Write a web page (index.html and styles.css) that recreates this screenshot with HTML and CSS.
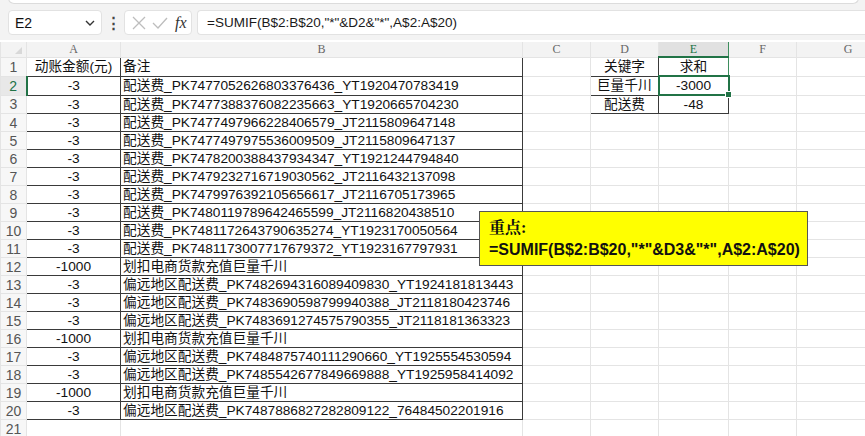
FILE: index.html
```html
<!DOCTYPE html>
<html lang="zh-CN">
<head>
    <meta charset="UTF-8">
    <title>SUMIF 模糊求和</title>
    <link rel="stylesheet" href="styles.css">
</head>
<body>
    <!-- Formula bar -->
    <div class="ribbon-edge"></div>
    <div class="toolbar">
        <div class="name-box">
            <span>E2</span>
            <svg width="10" height="6" viewBox="0 0 10 6"><path d="M1 1 L5 5 L9 1" fill="none" stroke="#333" stroke-width="1.4"/></svg>
        </div>
        <div class="grip">&#8942;</div>
        <div class="fx-box">
            <svg width="16" height="16" viewBox="0 0 16 16"><path d="M2 2 L14 14 M14 2 L2 14" stroke="#bdbdbd" stroke-width="1.3"/></svg>
            <svg width="18" height="16" viewBox="0 0 18 16"><path d="M2 8 L7 13 L16 3" fill="none" stroke="#bdbdbd" stroke-width="1.3"/></svg>
            <span class="fx">fx</span>
        </div>
        <div class="formula-box">=SUMIF(B$2:B$20,"*"&amp;D2&amp;"*",A$2:A$20)</div>
    </div>

    <!-- Sheet grid -->
    <table class="sheet">
        <colgroup>
            <col class="c-row"><col class="c-a"><col class="c-b"><col class="c-n"><col class="c-n"><col class="c-e"><col class="c-n"><col>
        </colgroup>
        <thead>
            <tr>
                <th class="corner"><span class="tri"></span></th>
                <th>A</th><th>B</th><th>C</th><th>D</th><th class="sel-col">E</th><th>F</th><th>G</th>
            </tr>
        </thead>
        <tbody>
            <tr><th>1</th><td class="a">动账金额(元)</td><td class="b">备注</td><td></td><td class="d">关键字</td><td class="d e1">求和</td><td></td><td></td></tr>
            <tr><th class="sel-row">2</th><td class="a">-3</td><td class="b">配送费_PK7477052626803376436_YT1920470783419</td><td></td><td class="d">巨量千川</td><td class="d active">-3000<span class="handle"></span></td><td></td><td></td></tr>
            <tr><th>3</th><td class="a">-3</td><td class="b">配送费_PK7477388376082235663_YT1920665704230</td><td></td><td class="d">配送费</td><td class="d">-48</td><td></td><td></td></tr>
            <tr><th>4</th><td class="a">-3</td><td class="b">配送费_PK7477497966228406579_JT2115809647148</td><td></td><td></td><td></td><td></td><td></td></tr>
            <tr><th>5</th><td class="a">-3</td><td class="b">配送费_PK7477497975536009509_JT2115809647137</td><td></td><td></td><td></td><td></td><td></td></tr>
            <tr><th>6</th><td class="a">-3</td><td class="b">配送费_PK7478200388437934347_YT1921244794840</td><td></td><td></td><td></td><td></td><td></td></tr>
            <tr><th>7</th><td class="a">-3</td><td class="b">配送费_PK7479232716719030562_JT2116432137098</td><td></td><td></td><td></td><td></td><td></td></tr>
            <tr><th>8</th><td class="a">-3</td><td class="b">配送费_PK7479976392105656617_JT2116705173965</td><td></td><td></td><td></td><td></td><td></td></tr>
            <tr><th>9</th><td class="a">-3</td><td class="b">配送费_PK7480119789642465599_JT2116820438510</td><td></td><td></td><td></td><td></td><td></td></tr>
            <tr><th>10</th><td class="a">-3</td><td class="b">配送费_PK7481172643790635274_YT1923170050564</td><td></td><td></td><td></td><td></td><td></td></tr>
            <tr><th>11</th><td class="a">-3</td><td class="b">配送费_PK7481173007717679372_YT1923167797931</td><td></td><td></td><td></td><td></td><td></td></tr>
            <tr><th>12</th><td class="a">-1000</td><td class="b">划扣电商货款充值巨量千川</td><td></td><td></td><td></td><td></td><td></td></tr>
            <tr><th>13</th><td class="a">-3</td><td class="b">偏远地区配送费_PK7482694316089409830_YT1924181813443</td><td></td><td></td><td></td><td></td><td></td></tr>
            <tr><th>14</th><td class="a">-3</td><td class="b">偏远地区配送费_PK7483690598799940388_JT2118180423746</td><td></td><td></td><td></td><td></td><td></td></tr>
            <tr><th>15</th><td class="a">-3</td><td class="b">偏远地区配送费_PK7483691274575790355_JT2118181363323</td><td></td><td></td><td></td><td></td><td></td></tr>
            <tr><th>16</th><td class="a">-1000</td><td class="b">划扣电商货款充值巨量千川</td><td></td><td></td><td></td><td></td><td></td></tr>
            <tr><th>17</th><td class="a">-3</td><td class="b">偏远地区配送费_PK7484875740111290660_YT1925554530594</td><td></td><td></td><td></td><td></td><td></td></tr>
            <tr><th>18</th><td class="a">-3</td><td class="b">偏远地区配送费_PK7485542677849669888_YT1925958414092</td><td></td><td></td><td></td><td></td><td></td></tr>
            <tr><th>19</th><td class="a">-1000</td><td class="b">划扣电商货款充值巨量千川</td><td></td><td></td><td></td><td></td><td></td></tr>
            <tr><th>20</th><td class="a">-3</td><td class="b">偏远地区配送费_PK7487886827282809122_76484502201916</td><td></td><td></td><td></td><td></td><td></td></tr>
            <tr><th>21</th><td></td><td></td><td></td><td></td><td></td><td></td><td></td></tr>
        </tbody>
    </table>

    <!-- Yellow note box floating over the sheet -->
    <div class="note">
        <div class="note-title">重点:</div>
        <div class="note-formula">=SUMIF(B$2:B$20,"*"&amp;D3&amp;"*",A$2:A$20)</div>
    </div>
</body>
</html>
```

FILE: styles.css
```css
body {
    margin: 0;
    background: #fff;
    font-family: "Liberation Sans", Arial, "Noto Sans CJK SC", sans-serif;
    color: #111;
    overflow: hidden;
}

/* top toolbar */
.ribbon-edge {
    height: 3px;
    margin: -8px 6px 0 8px;
    padding-top: 8px;
    background: #fff;
    border: 1px solid #dcdcdc;
    border-top: none;
    border-radius: 0 0 6px 6px;
    position: relative;
    z-index: 1;
}

.toolbar {
    height: 40px;
    margin-top: -4px;
    padding: 10px 0 0 8px;
    box-sizing: border-box;
    background: #f3f3f3;
    display: flex;
    align-items: flex-start;
}

.name-box, .fx-box, .formula-box {
    height: 25px;
    box-sizing: border-box;
    background: #fff;
    border: 1px solid #e2e2e2;
    border-radius: 4px;
    display: flex;
    align-items: center;
}

.name-box {
    width: 94px;
    padding: 0 6px 0 6px;
    justify-content: space-between;
    font-size: 14px;
}

.grip {
    width: 22px;
    text-align: center;
    font-size: 15px;
    font-weight: bold;
    line-height: 25px;
    color: #444;
}

.fx-box {
    width: 68px;
    padding: 0 4px 0 6px;
    gap: 4px;
}

.fx {
    font-family: "Liberation Serif", serif;
    font-style: italic;
    font-size: 16px;
    color: #333;
    margin-left: 2px;
}

.formula-box {
    flex: 1;
    margin-left: 5px;
    padding-left: 9px;
    font-size: 13.5px;
    color: #1a1a1a;
    border-right: none;
    border-radius: 4px 0 0 4px;
}

/* the sheet */
.sheet {
    border-collapse: collapse;
    table-layout: fixed;
    width: 900px;
    margin-top: 2px;
    font-size: 13.7px;
}

.c-row { width: 26px; }
.c-a { width: 94px; }
.c-b { width: 402px; }
.c-n { width: 68px; }
.c-e { width: 70px; }

.sheet thead th {
    height: 14px;
    padding: 0;
    background: #f3f3f3;
    border: 1px solid #e4e4e4;
    border-top: none;
    font-family: "Liberation Serif", serif;
    font-weight: normal;
    font-size: 12px;
    line-height: 12px;
    color: #666;
}

.sheet thead th.corner {
    position: relative;
}

.tri {
    position: absolute;
    right: 4px;
    bottom: 3px;
    width: 0;
    height: 0;
    border-left: 7px solid transparent;
    border-bottom: 7px solid #d8d8d8;
}

.sheet thead th.sel-col {
    background: #e1e1e1;
    color: #217346;
    border-left: 1px solid #3e8e5e;
    border-right: 1px solid #3e8e5e;
    border-bottom: 2px solid #217346;
}

.sheet tbody th {
    height: 17px;
    padding: 0;
    background: #f7f7f7;
    border: 1px solid #e4e4e4;
    font-weight: normal;
    font-size: 14px;
    color: #555;
}

.sheet tbody th.sel-row {
    color: #217346;
    background: #e8e8e8;
    border-right: 2px solid #217346;
}

.sheet td {
    height: 17px;
    padding: 0 2px;
    border: 1px solid #e4e4e4;
    white-space: nowrap;
    overflow: visible;
    line-height: 17px;
}

.sheet td.a, .sheet td.b, .sheet td.d {
    border: 1px solid #3a3a3a;
}

.sheet td.a, .sheet td.d {
    text-align: center;
}

.sheet td.e1 {
    border-left-color: #3e8e5e;
    border-right-color: #3e8e5e;
}

.sheet td.active {
    position: relative;
    border: 2px solid #217346;
}

.handle {
    position: absolute;
    right: -4px;
    bottom: -4px;
    width: 5px;
    height: 5px;
    background: #217346;
    border: 1px solid #fff;
}

/* highlighted note */
.note {
    position: absolute;
    left: 479px;
    top: 211px;
    width: 329px;
    height: 55px;
    box-sizing: border-box;
    padding: 5px 0 0 9px;
    background: #ffff00;
    border: 1px solid #555;
}

.note-title {
    font-family: "Liberation Serif", "Noto Serif CJK SC", "Noto Sans CJK SC", serif;
    font-weight: bold;
    font-size: 16px;
    line-height: 21px;
}

.note-formula {
    font-weight: bold;
    font-size: 16px;
    line-height: 24px;
}
```
